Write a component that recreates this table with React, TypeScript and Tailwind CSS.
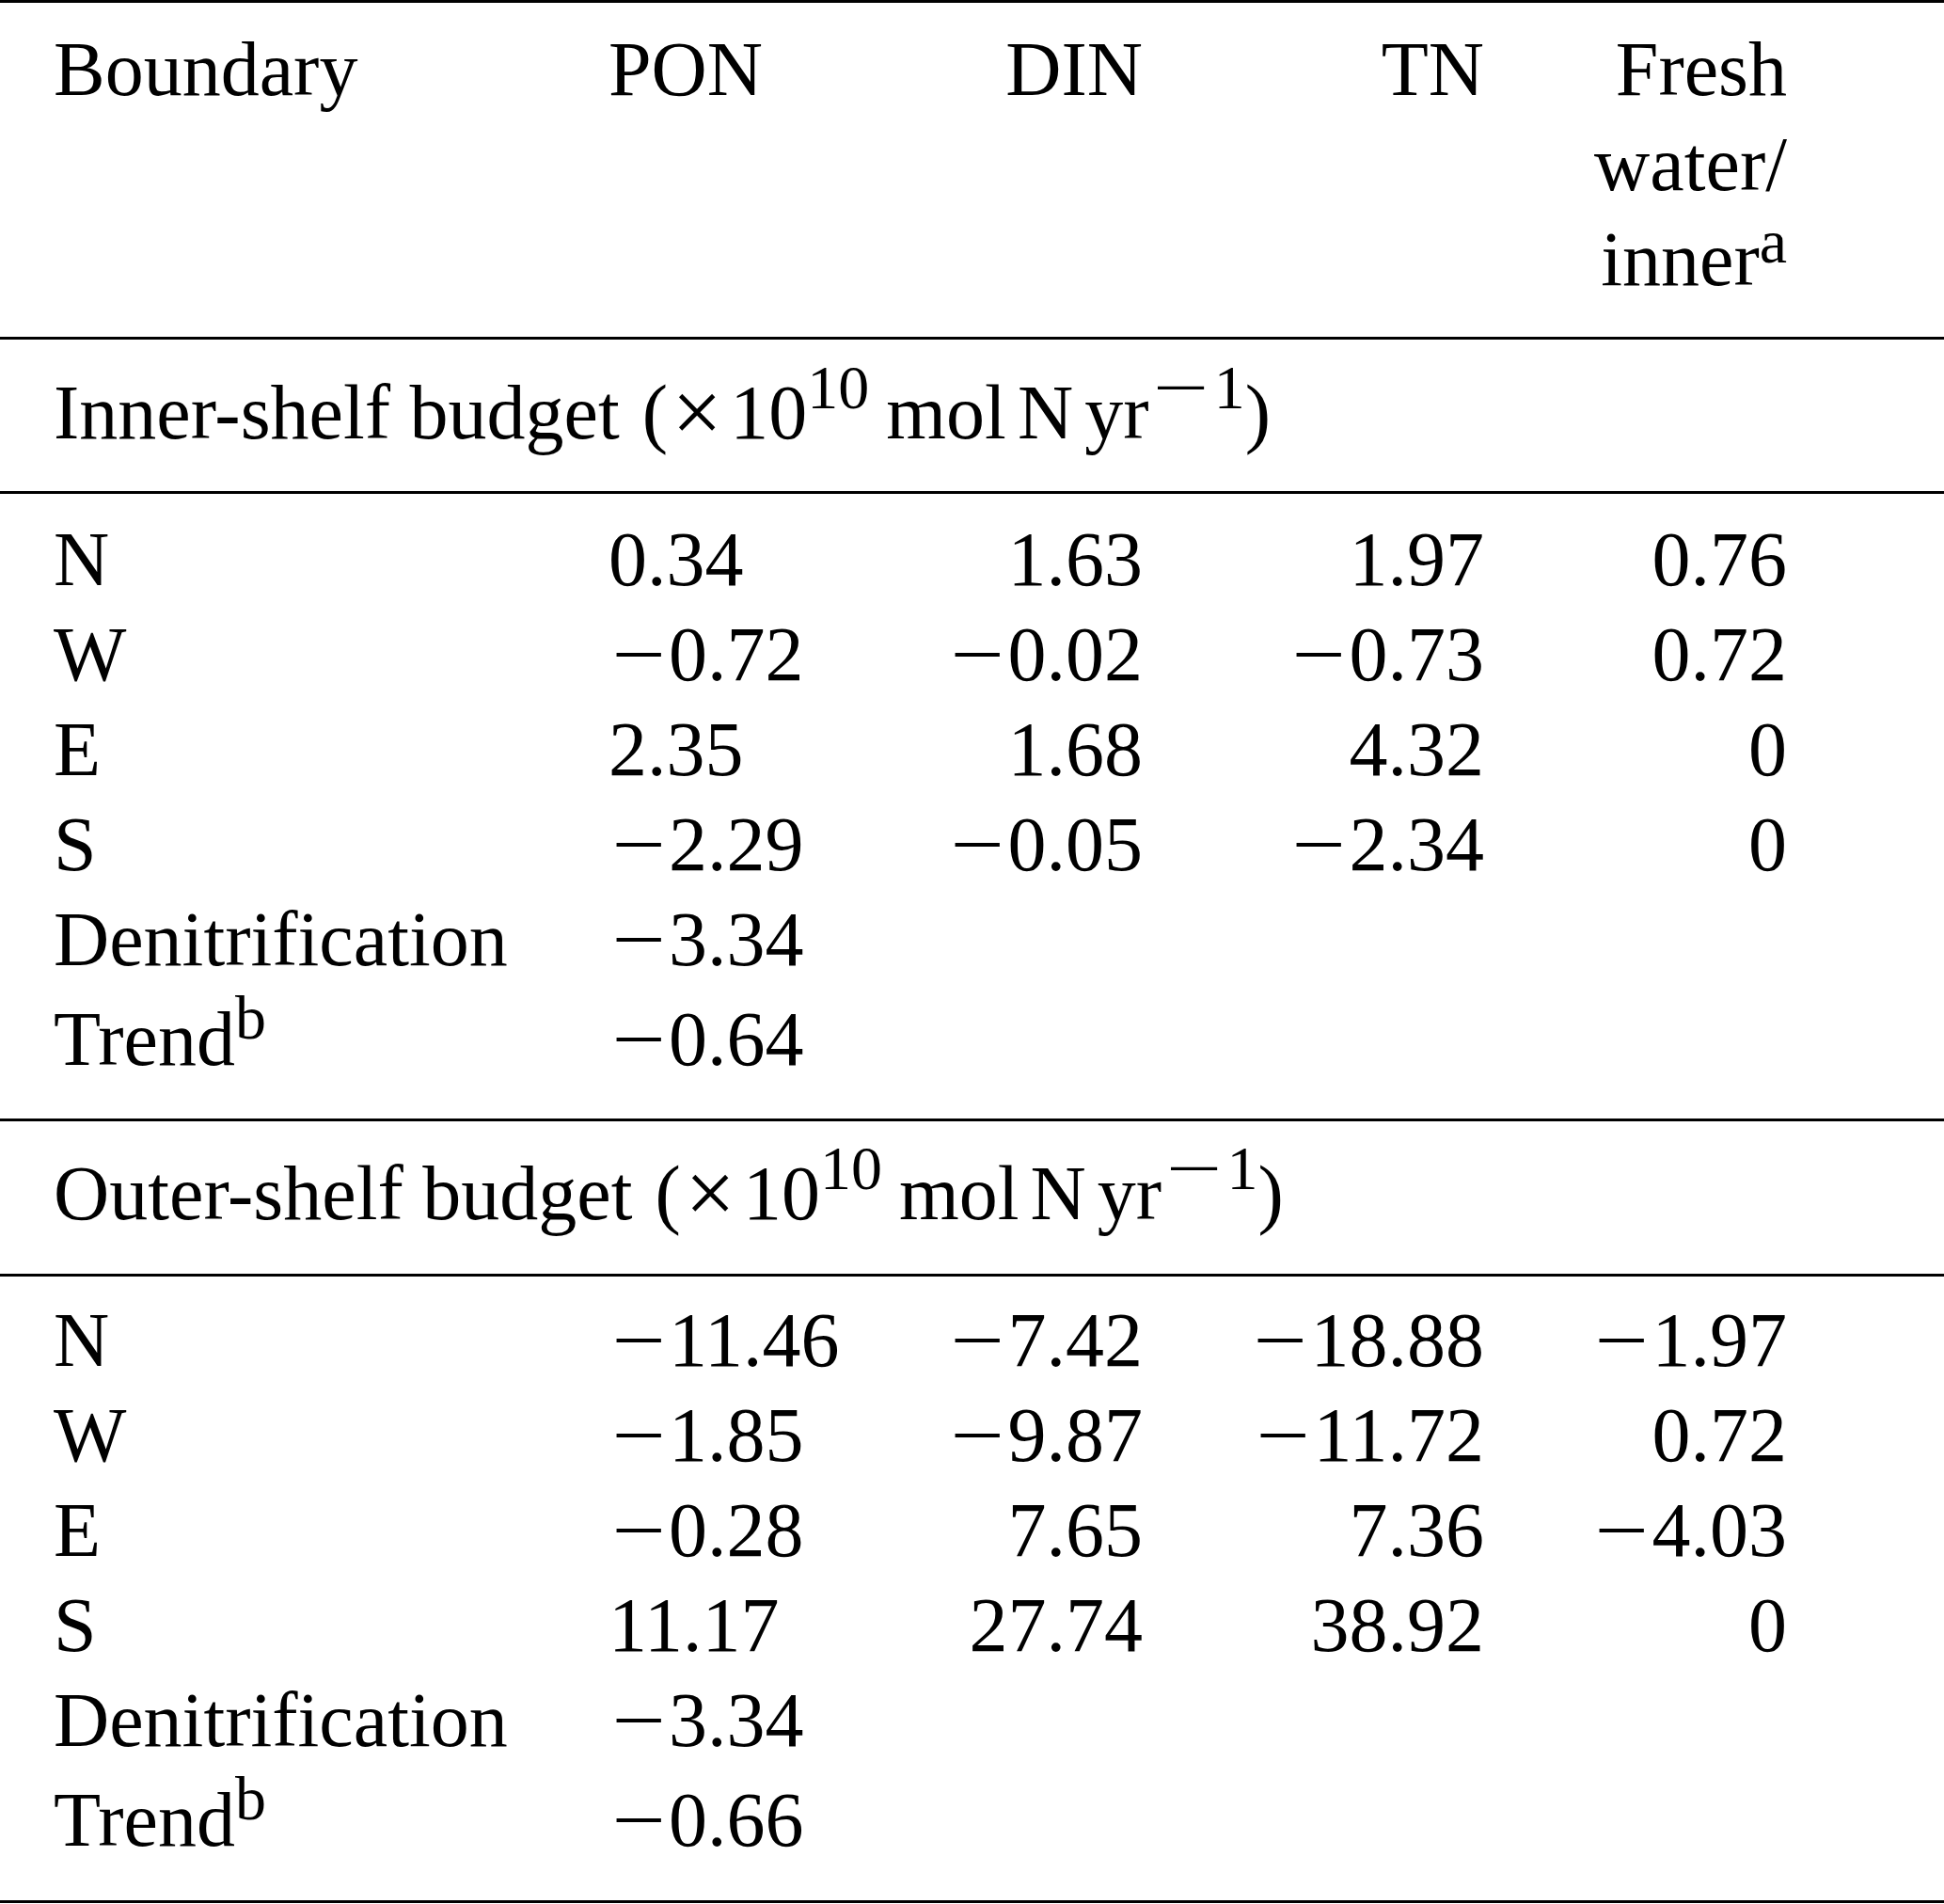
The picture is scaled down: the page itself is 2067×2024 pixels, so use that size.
import type { ReactNode } from "react"

type Row = { label: string; sup?: string; cells: string[] }

const innerRows: Row[] = [
  { label: "N", cells: ["0.34", "1.63", "1.97", "0.76"] },
  { label: "W", cells: ["-0.72", "-0.02", "-0.73", "0.72"] },
  { label: "E", cells: ["2.35", "1.68", "4.32", "0"] },
  { label: "S", cells: ["-2.29", "-0.05", "-2.34", "0"] },
  { label: "Denitrification", cells: ["-3.34"] },
  { label: "Trend", sup: "b", cells: ["-0.64"] },
]

const outerRows: Row[] = [
  { label: "N", cells: ["-11.46", "-7.42", "-18.88", "-1.97"] },
  { label: "W", cells: ["-1.85", "-9.87", "-11.72", "0.72"] },
  { label: "E", cells: ["-0.28", "7.65", "7.36", "-4.03"] },
  { label: "S", cells: ["11.17", "27.74", "38.92", "0"] },
  { label: "Denitrification", cells: ["-3.34"] },
  { label: "Trend", sup: "b", cells: ["-0.66"] },
]

// wide TeX-style minus: real glyph, stretched
const Minus = ({ box = "w-[0.78em]", bar = "scale-x-[1.24]" }: { box?: string; bar?: string }) => (
  <span className={`inline-block text-center ${box}`}>
    <span className={`inline-block ${bar}`}>−</span>
  </span>
)

const Num = ({ v }: { v: string }) =>
  v.startsWith("-") ? (
    <>
      <Minus />
      {v.slice(1)}
    </>
  ) : (
    <>{v}</>
  )

const Sup = ({
  children,
  raise = "top-[-32px]",
  className = "",
}: {
  children: ReactNode
  raise?: string
  className?: string
}) => <span className={`relative text-[66px] leading-none ${raise} ${className}`}>{children}</span>

const Rule = () => <div className="h-[3px] w-full bg-black" />

const grid = "grid grid-cols-[590px_300px_268px_363px_322px] pl-[57px]"

const Rows = ({ rows, pt }: { rows: Row[]; pt: string }) => (
  <div className={pt}>
    {rows.map((r, i) => (
      <div key={i} className={`${grid} ${r.sup ? "pt-[5px]" : ""}`}>
        <div>
          {r.label}
          {r.sup && <Sup raise="top-[-28px]">{r.sup}</Sup>}
        </div>
        <div className="text-left">{r.cells[0] && <Num v={r.cells[0]} />}</div>
        <div className="text-right">{r.cells[1] && <Num v={r.cells[1]} />}</div>
        <div className="text-right">{r.cells[2] && <Num v={r.cells[2]} />}</div>
        <div className="text-right">{r.cells[3] && <Num v={r.cells[3]} />}</div>
      </div>
    ))}
  </div>
)

const Title = ({ name }: { name: string }) => (
  <div className="pl-[57px] whitespace-nowrap">
    {name} budget
    <span className="ml-[24px]">(</span>
    <span className="ml-[8px] inline-block scale-[1.15]">×</span>
    <span className="ml-[12px]">10</span>
    <Sup>10</Sup>
    <span className="ml-[18px]">mol</span>
    <span className="ml-[12px]">N</span>
    <span className="ml-[12px]">yr</span>
    <Sup>
      <Minus box="w-[1.05em]" bar="scale-x-[1.6]" />1
    </Sup>
    <span>)</span>
  </div>
)

export default function App() {
  return (
    <div className="w-[2067px] min-h-[2024px] bg-white text-black text-[82px] leading-[101px] font-['Liberation_Serif','Times_New_Roman',serif]">
      <Rule />

      {/* header */}
      <div className={`${grid} pt-[20px] pb-[32px]`}>
        <div>Boundary</div>
        <div className="text-left">PON</div>
        <div className="text-right">DIN</div>
        <div className="text-right">TN</div>
        <div className="text-right">
          Fresh
          <br />
          water/
          <br />
          inner<Sup raise="top-[-24px]">a</Sup>
        </div>
      </div>
      <Rule />

      <div className="pt-[27px] pb-[33px]">
        <Title name="Inner-shelf" />
      </div>
      <Rule />
      <div className="pb-[34px]">
        <Rows rows={innerRows} pt="pt-[19px]" />
      </div>
      <Rule />

      <div className="pt-[26px] pb-[35px]">
        <Title name="Outer-shelf" />
      </div>
      <Rule />
      <div className="pb-[35px]">
        <Rows rows={outerRows} pt="pt-[17px]" />
      </div>
      <Rule />
    </div>
  )
}
